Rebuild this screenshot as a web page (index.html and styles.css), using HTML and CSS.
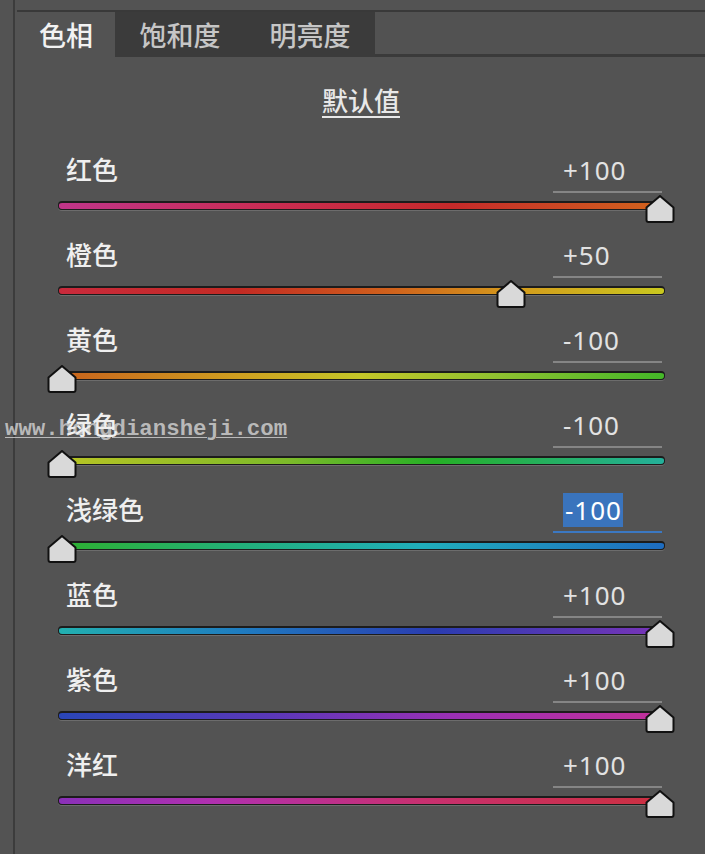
FILE: index.html
```html
<!DOCTYPE html>
<html lang="zh-CN">
<head>
  <meta charset="UTF-8" />
  <title>HSL 调整</title>
  <link rel="stylesheet" href="styles.css" />
</head>
<body>

  <!-- 滑块共用的三角头 -->
  <svg width="0" height="0" class="defs">
    <symbol id="knob" viewBox="0 0 30 28">
      <path d="M15 1 L28.5 12.5 L28.5 25 Q28.5 27 26.5 27 L3.5 27 Q1.5 27 1.5 25 L1.5 12.5 Z"
            fill="#d9d9d9" stroke="#111" stroke-width="2" stroke-linejoin="round" />
    </symbol>
  </svg>

  <div class="frame">
    <div class="panel">

      <div class="tabs">
        <div class="tab active">色相</div>
        <div class="tab">饱和度</div>
        <div class="tab">明亮度</div>
        <div class="tab-rest"></div>
      </div>

      <div class="defaults"><span>默认值</span></div>

      <div class="sliders">
        <div class="slider">
          <div class="slider-head">
            <span class="slider-name">红色</span>
            <span class="slider-value">+100</span>
          </div>
          <div class="slider-track">
            <div class="rail rail-red"></div>
            <div class="knob-lane"><svg class="knob" style="left:100%"><use href="#knob" /></svg></div>
          </div>
        </div>

        <div class="slider">
          <div class="slider-head">
            <span class="slider-name">橙色</span>
            <span class="slider-value">+50</span>
          </div>
          <div class="slider-track">
            <div class="rail rail-orange"></div>
            <div class="knob-lane"><svg class="knob" style="left:75%"><use href="#knob" /></svg></div>
          </div>
        </div>

        <div class="slider">
          <div class="slider-head">
            <span class="slider-name">黄色</span>
            <span class="slider-value">-100</span>
          </div>
          <div class="slider-track">
            <div class="rail rail-yellow"></div>
            <div class="knob-lane"><svg class="knob" style="left:0%"><use href="#knob" /></svg></div>
          </div>
        </div>

        <div class="slider">
          <div class="slider-head">
            <span class="slider-name">绿色</span>
            <span class="slider-value">-100</span>
          </div>
          <div class="slider-track">
            <div class="rail rail-green"></div>
            <div class="knob-lane"><svg class="knob" style="left:0%"><use href="#knob" /></svg></div>
          </div>
        </div>

        <div class="slider">
          <div class="slider-head">
            <span class="slider-name">浅绿色</span>
            <span class="slider-value focused"><span class="selected">-100</span></span>
          </div>
          <div class="slider-track">
            <div class="rail rail-aqua"></div>
            <div class="knob-lane"><svg class="knob" style="left:0%"><use href="#knob" /></svg></div>
          </div>
        </div>

        <div class="slider">
          <div class="slider-head">
            <span class="slider-name">蓝色</span>
            <span class="slider-value">+100</span>
          </div>
          <div class="slider-track">
            <div class="rail rail-blue"></div>
            <div class="knob-lane"><svg class="knob" style="left:100%"><use href="#knob" /></svg></div>
          </div>
        </div>

        <div class="slider">
          <div class="slider-head">
            <span class="slider-name">紫色</span>
            <span class="slider-value">+100</span>
          </div>
          <div class="slider-track">
            <div class="rail rail-purple"></div>
            <div class="knob-lane"><svg class="knob" style="left:100%"><use href="#knob" /></svg></div>
          </div>
        </div>

        <div class="slider">
          <div class="slider-head">
            <span class="slider-name">洋红</span>
            <span class="slider-value">+100</span>
          </div>
          <div class="slider-track">
            <div class="rail rail-magenta"></div>
            <div class="knob-lane"><svg class="knob" style="left:100%"><use href="#knob" /></svg></div>
          </div>
        </div>
      </div>

    </div>
  </div>

  <div class="watermark">www.hongdiansheji.com</div>

</body>
</html>
```

FILE: styles.css
```css
/* 基本设定 */
body {
  margin: 0;
  background-color: #535353;
  font-family: "Noto Sans CJK SC", "Noto Sans", sans-serif;
  color: #ececec;
  height: 854px;
  overflow: hidden;
}

.defs {
  position: absolute;
}

/* 左侧边框线 */
.frame {
  margin-left: 13px;
  padding-left: 2px;
  padding-top: 10px;
  border-left: 2px solid #3c3c3c;
  height: 844px;
}

.panel {
  border-top: 2px solid #393939;
}

/* 标签页 */
.tabs {
  display: flex;
  height: 45px;
}

.tab {
  width: 130px;
  background-color: #3b3b3b;
  color: #c6c6c6;
  font-size: 27px;
  font-weight: 500;
  line-height: 45px;
  text-align: center;
}

.tab.active {
  width: 98px;
  background-color: #535353;
  color: #f2f2f2;
}

.tab-rest {
  flex: 1;
  box-sizing: border-box;
  border-bottom: 3px solid #3a3a3a;
  background-color: #525252;
}

/* 默认值 */
.defaults {
  margin-top: 24px;
  height: 38px;
  line-height: 38px;
  text-align: center;
  font-size: 26px;
  font-weight: 500;
  color: #e8e8e8;
}

.defaults span {
  text-decoration: underline;
  text-decoration-thickness: 2px;
  text-underline-offset: 5px;
}

/* 滑块列表 */
.sliders {
  margin-top: 21px;
  margin-left: 41px;
  width: 607px;
}

.slider {
  height: 85px;
}

.slider-head {
  display: flex;
  justify-content: space-between;
  align-items: flex-start;
  height: 53px;
  padding-left: 8px;
  padding-right: 3px;
}

.slider-name {
  position: relative;
  z-index: 1;
  margin-top: 11px;
  font-size: 26px;
  font-weight: 500;
  line-height: 36px;
  color: #efefef;
}

.slider-value {
  box-sizing: border-box;
  width: 109px;
  margin-top: 12px;
  padding-left: 10px;
  padding-bottom: 3px;
  border-bottom: 2px solid #858585;
  font-family: "Noto Sans", sans-serif;
  font-size: 26px;
  letter-spacing: 1px;
  line-height: 36px;
  color: #e2e2e2;
}

.slider-value.focused {
  border-bottom-color: #3b78c2;
}

.slider-value .selected {
  display: inline-block;
  background-color: #3a74bd;
  color: #fff;
  padding: 0 1px 0 2px;
  line-height: 34px;
  margin-top: 1px;
}

/* 轨道 */
.slider-track {
  position: relative;
  margin-top: 8px;
  height: 10px;
}

.rail {
  box-sizing: border-box;
  height: 9px;
  border: 1px solid #1c1c1c;
  border-top-width: 2px;
  border-radius: 4px;
  box-shadow: 0 1px 0 #6c6c6c;
}

.rail-red     { background: linear-gradient(90deg, #c0358a 0%, #c92c52 35%, #c52a2a 65%, #d2641c 100%); }
.rail-orange  { background: linear-gradient(90deg, #c92a3c 0%, #c32b24 30%, #d0621c 55%, #d49a1c 75%, #c9c81f 100%); }
.rail-yellow  { background: linear-gradient(90deg, #c8621c 0%, #cfa020 30%, #c4c628 50%, #90c030 72%, #44b828 100%); }
.rail-green   { background: linear-gradient(90deg, #b8c424 0%, #7cba2a 38%, #26b026 62%, #24b09a 100%); }
.rail-aqua    { background: linear-gradient(90deg, #2eb030 0%, #22b07a 30%, #20aebc 60%, #1e6cc0 100%); }
.rail-blue    { background: linear-gradient(90deg, #22b0b0 0%, #1f7cc0 30%, #2a3cb0 62%, #7a34b8 100%); }
.rail-purple  { background: linear-gradient(90deg, #2a46b8 0%, #5a38b8 35%, #9a30b4 65%, #c2309a 100%); }
.rail-magenta { background: linear-gradient(90deg, #8a30b8 0%, #b030b0 25%, #c83070 60%, #cc3040 100%); }

/* 三角头 */
.knob-lane {
  position: absolute;
  left: 4px;
  right: 5px;
  top: 0;
  bottom: 0;
}

.knob {
  position: absolute;
  top: -6px;
  width: 30px;
  height: 28px;
  margin-left: -15px;
}

/* 水印 */
.watermark {
  position: absolute;
  left: 5px;
  top: 417px;
  font-family: "Liberation Mono", monospace;
  font-weight: bold;
  font-size: 22.4px;
  line-height: 24px;
  color: rgba(205, 205, 205, 0.85);
  text-decoration: underline;
  text-decoration-thickness: 1px;
  text-underline-offset: 2px;
}
```
